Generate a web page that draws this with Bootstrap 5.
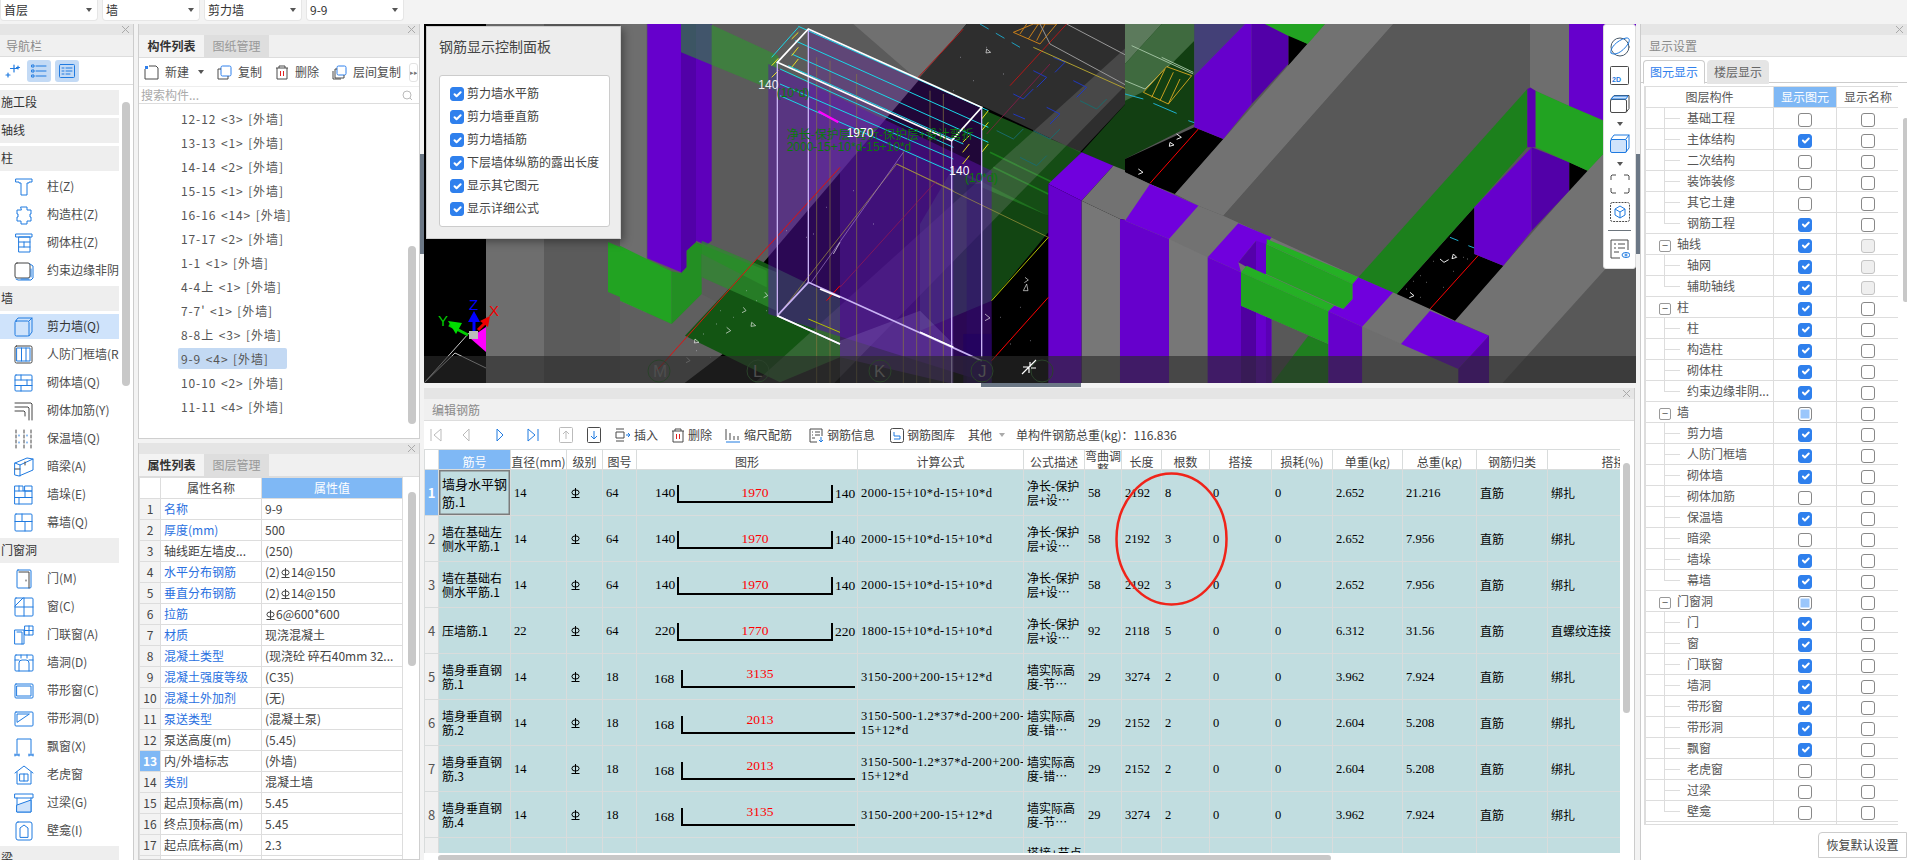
<!DOCTYPE html>
<html lang="zh">
<head>
<meta charset="utf-8">
<title>钢筋显示控制面板</title>
<link rel="stylesheet" href="https://cdn.jsdelivr.net/npm/bootstrap@5.3.0/dist/css/bootstrap.min.css">
<style>
html,body{height:100%;overflow:hidden}
body{width:1907px;height:860px;background:#f3f3f3;font:12px/1.2 "Noto Sans CJK SC","Liberation Sans",sans-serif;color:#4d4d4d}
.ic{fill:none;stroke:#1f7ae0;stroke-width:1;stroke-linejoin:round;stroke-linecap:round;flex:none}
.icd{fill:none;stroke:#4a4a4a;stroke-width:1;stroke-linejoin:round;flex:none}
.top-bar{height:24px}
.sel-box{width:98px;height:21px;background:#fff;border:1px solid #e6e6e6;border-top:0;border-radius:0 0 4px 4px;padding:0 5px 0 3px;font-size:12px;color:#333}
.tri{width:0;height:0;border-left:3.5px solid transparent;border-right:3.5px solid transparent;border-top:4px solid #555;flex:none}
.app-main{height:836px}
.col-nav{width:134px;background:#fff;border-right:1px solid #ccc}
.col-mid{width:282px;margin-left:4px}
.pane{background:#fff;border:1px solid #cfcfcf;border-top:0}
.pane-top{height:415px}
.pane-bot{height:417px;margin-top:4px}
.strip{height:11px;background:#e5e5e5;flex:none;position:relative}
.strip-x{position:absolute;right:3px;top:1px;width:9px;height:9px}
.p-title{height:22px;line-height:22px;background:#f0f0f0;color:#8a8a8a;padding-left:6px;border-bottom:1px solid #ddd;flex:none}
.nav-tool{height:28px;padding-left:5px;border-bottom:1px solid #ddd}
.nt-btn{width:24px;height:22px;background:#c3daf5;border-radius:3px}
.nav-ul{width:119px;padding-top:5px}
.nav-ul .list-group-item{height:25px;margin-bottom:3px;padding:0;border:0;background:#fff;font-size:12px;color:#4d4d4d;white-space:nowrap;overflow:hidden;border-radius:0}
.nav-ul .nav-grp{background:#eee;padding-left:1px;color:#333}
.nav-ul .nav-it{padding-left:14px;gap:13px}
.nav-ul .list-group-item.active{background:#cfe3fb;color:#333;margin-top:0}
.scr{position:absolute;background:#c8c8c8;border-radius:4px;width:8px}
.scr-nav{left:122px;top:78px;height:284px}
.scr-list{left:269px;top:222px;height:178px}
.scr-prop{left:269px;top:49px;height:174px}
.scr-rb{left:1199px;top:75px;height:250px;width:7px}
.scr-disp{left:262px;top:94px;height:184px;width:5px}
.tab-row{height:23px;background:#f0f0f0;border-bottom:1px solid #ddd;padding:0}
.tab-row .nav-link{width:65px;height:22px;padding:0;line-height:22px;text-align:center;border:0;border-radius:0;color:#999;background:#dedede;font-size:12px}
.tab-row .nav-link.active{background:#f3f3f3;color:#333;font-weight:700}
.tl-row{height:28px;padding-left:5px;gap:5px;border-bottom:0;white-space:nowrap}
.tl-row .tg{flex:none}
.tl-more{width:9px;height:19px;border:1px solid #e3e3e3;border-radius:3px;font-size:7px;color:#777;margin-left:auto;margin-right:1px;line-height:17px;text-align:center;flex:none;overflow:hidden}
.srch{height:18px;border:0;border-top:1px solid #eee;border-bottom:1px solid #ddd;border-radius:0;padding:0 6px 0 2px;color:#aaa;font-size:12px;background:#fff}
.cp-list{padding-top:3px}
.cp-list .list-group-item{height:24px;line-height:24px;border:0;padding:0 0 0 42px;background:transparent;color:#555;font-size:12px;word-spacing:1px;letter-spacing:.9px}
.sel-tag{display:inline-block;background:#c3d9f3;border-radius:2px;height:21px;line-height:21px;padding:0 18px 0 3px;margin-left:-3px}
.tb-prop{width:264px;table-layout:fixed;margin:0;font-size:12px;border-color:#ddd;color:#444}
.tb-prop td,.tb-prop th{padding:0 0 0 3px;height:21px;line-height:20px;font-weight:400;border-color:#ddd;white-space:nowrap;overflow:hidden;background:transparent;color:inherit}
.tb-prop th{height:20px;text-align:center;padding:0}
.w21{width:21px}.w101{width:101px}
.tb-prop .rno{text-align:center;background:#f3f3f3;padding:0;color:#444;font-size:12px}
.tb-prop .rno-a{background:#7fb8f5;color:#fff;font-weight:700}
.th-a{background:#7fb8f5!important;color:#fff!important}
.lnk{color:#2a70e0!important}
.cell-cur{box-shadow:inset 0 0 0 2px #7c7c7c}
.hrb{width:9px;height:10px;fill:none;stroke:currentColor;stroke-width:1;vertical-align:-1px;margin:0 1px}
.sp-v{width:4px;position:relative}
.sp-bar{position:absolute;left:0;top:130px;width:4px;height:100px;background:#6b7785}
.col-ctr{width:1212px}
.cv{height:359px;position:relative;overflow:hidden;background:#000}
.cv svg.scene{display:block}
.ctrl{position:absolute;left:2px;top:2px;width:195px;height:213px;background:#ededed;border:1px solid #cfcfcf;box-shadow:3px 3px 8px rgba(0,0,0,.35);padding:0 12px}
.ctrl-t{font-size:14px;line-height:20px;color:#444;margin-top:9px;margin-bottom:19px}
.ctrl-box{width:171px;height:152px;margin-left:0;background:#fff;border:1px solid #ccc;border-radius:3px;padding:6px 10px}
.ctrl-row{height:23px;display:flex;align-items:center;gap:3px;margin:0;padding:0;color:#444}
.form-check-input.cb{width:14px;height:14px;margin:0;border-radius:3px;border:1px solid #888;background-color:#fff;flex:none;float:none}
.form-check-input.cb:checked{background-color:#2f80ed;border-color:#2f80ed;background-size:13px}
.form-check-input.cb-off{background-color:#efefef;border-color:#c4c4c4}
.form-check-input.cb-part{background-color:#9ac6fb;box-shadow:inset 0 0 0 1.5px #fff}
.palette{position:absolute;left:1179px;top:0;width:33px;height:245px;background:#fff;border:1px solid #ddd;border-radius:3px;padding-top:11px;gap:0}
.sp-h{height:5px;position:relative}
.sp-h-bar{position:absolute;left:557px;top:0;width:100px;height:4px;background:#6b7785}
.ed-pane{width:1211px;height:472px;background:#fff;border-right:1px solid #ccc;position:relative;overflow:hidden}
.ed-title{height:22px;line-height:22px;background:#f0f0f0;color:#8a8a8a;padding-left:8px;border-bottom:1px solid #ddd}
.ed-tool{height:28px;color:#444;padding-left:6px;flex:none}
.tg{gap:3px;display:flex;align-items:center}
.m3{margin-left:3px}
.rb-wrap{width:1196px;height:404px;overflow:hidden;flex:none}
.tb-rb{width:1279px;table-layout:fixed;margin:0;border-color:#d9dcdc;font-size:12px;color:#000}
.tb-rb th,.tb-rb td{padding:0 0 0 3px;border-color:#d9dcdc;background:transparent;color:inherit;line-height:14px;overflow:hidden}
.tb-rb tbody tr{height:45px}
.tb-rb thead tr{height:20px}
.tb-rb th{font-weight:400;text-align:center;color:#444;padding:0;background:#fff;white-space:nowrap}
.tb-rb th.th-a{background:#7fb8f5!important}
.tb-rb td{background:#c1dde0;font-family:"Liberation Serif","Noto Sans CJK SC",serif;font-size:12.500px;vertical-align:middle}
.tb-rb td.cj{font-family:"Noto Sans CJK SC",sans-serif;font-size:12px}
.tb-rb td.fm{letter-spacing:.45px;white-space:nowrap}
.tb-rb td.no{background:#f0f0f0;padding:0;text-align:center;font-family:"Noto Sans CJK SC",sans-serif;color:#555;font-size:13px}
.tb-rb td.no-a{background:#7fb8f5;color:#fff;font-weight:700}
.tb-rb td.shp{padding:0}
.tb-rb td.first-a{box-shadow:inset 0 0 0 1.5px #7c7c7c;line-height:18px;font-size:13px}
.th-clip{height:20px;overflow:hidden;white-space:normal;line-height:13px;margin-top:-3px}
.c0{width:14px}.c1{width:72px}.c2{width:56px}.c3{width:36px}.c4{width:34px}.c5{width:221px}.c6{width:166px}.c7{width:61px}.c8{width:37px}.c9{width:40px}.c10{width:48px}.c11{width:62px}.c12{width:61px}.c13{width:70px}.c14{width:74px}.c15{width:71px}.c16{width:156px}
.shp svg{display:block;width:221px;height:45px}
.shp text{font-family:"Liberation Serif",serif;font-size:13.500px}
.shp .red{fill:#f00}
.hs-track{height:8px;background:#fff;padding-left:14px}
.hs-thumb{width:893px;height:6px;margin-top:2px;background:#c8c8c8;border-radius:3px}
.ring{position:absolute;left:691px;top:84px;width:113px;height:134px;pointer-events:none}
.col-right{width:267px;background:#fff;position:relative;border-left:1px solid #ccc}
.disp-tabs{height:26px;padding:3px 0 0 2px;border-bottom:1px solid #ccc;margin:0}
.disp-tabs .nav-link{height:24px;line-height:22px;width:62px;padding:0;text-align:center;font-size:12px;border-radius:4px 4px 0 0;color:#666;background:#e5e5e5;border:1px solid #e5e5e5}
.disp-tabs .nav-link.active{background:#fff;color:#2f80ed;border-color:#ccc #ccc #fff}
.disp-tabs .nav-item+.nav-item{margin-left:2px}
.disp-wrap{margin:3px 0 0 3px;width:254px;height:739px;overflow:hidden;border-left:1px solid #ddd;border-bottom:1px solid #ddd}
.tb-disp{width:254px;table-layout:fixed;margin:0;font-size:12px;border-color:#ddd;color:#555}
.tb-disp th,.tb-disp td{padding:0;height:21px;line-height:20px;border-color:#ddd;background:transparent;color:inherit;font-weight:400;text-align:center;position:relative}
.tb-disp td.nm{text-align:left;padding-left:41px;white-space:nowrap;overflow:hidden}
.tb-disp td.gp{text-align:left;padding-left:13px;white-space:nowrap}
.tb-disp td.nm::before{content:"";position:absolute;left:18px;top:-1px;height:22px;border-left:1px solid #ddd}
.tb-disp td.nm.end::before{height:11px}
.tb-disp td.nm::after{content:"";position:absolute;left:18px;top:10px;width:16px;border-top:1px solid #ddd}
.w128{width:128px}.w63{width:63px}
.tb-disp .cb{vertical-align:middle}
.clp{display:inline-block;width:12px;height:12px;border:1px solid #999;border-radius:2px;line-height:9px;text-align:center;font-size:11px;margin-right:6px;vertical-align:-1px;color:#555}
.dft-btn{width:89px;height:26px;padding:0;font-size:12px;line-height:24px;background:#fff;border:1px solid #ccc;border-radius:4px 0 0 0;color:#444;margin-top:7px}
.ml20{margin-left:20px}.ml23{margin-left:23px}.ml26{margin-left:26px}.ml14{margin-left:14px}
.ml17{margin-left:17px}.ml13{margin-left:13px}.ml16{margin-left:16px}.ml15{margin-left:15px}.ml11{margin-left:11px}
</style>
</head>
<body>
<div class="top-bar d-flex gap-1">
  <div class="sel-box d-flex align-items-center justify-content-between"><span>首层</span><i class="tri"></i></div>
  <div class="sel-box d-flex align-items-center justify-content-between"><span>墙</span><i class="tri"></i></div>
  <div class="sel-box d-flex align-items-center justify-content-between"><span>剪力墙</span><i class="tri"></i></div>
  <div class="sel-box d-flex align-items-center justify-content-between"><span>9-9</span><i class="tri"></i></div>
</div>
<svg width="0" height="0" class="position-absolute"><defs>
  <symbol id="x" viewBox="0 0 9 9"><path d="M1 1l7 7M8 1L1 8" stroke="#aaa" fill="none"/></symbol>
  <symbol id="hrbs" viewBox="0 0 9 10"><ellipse cx="4.500" cy="4.500" rx="3.600" ry="2.600"/><path d="M4.500 0v9.500M.5 9.500h8"/></symbol>
</defs></svg>
<div class="app-main d-flex">
  <!-- navigation -->
  <aside class="col-nav position-relative overflow-hidden">
    <div class="strip"><svg class="strip-x"><use href="#x"/></svg></div>
    <div class="p-title">导航栏</div>
    <div class="nav-tool d-flex align-items-center gap-1">
      <svg class="ic" width="18" height="16" viewBox="0 0 18 16"><path d="M9 2v7M5.500 5.500h7M3 10v4M1 12h4M13 3v3M11.500 4.500h3" stroke-width="1.200"/></svg>
      <span class="nt-btn d-flex align-items-center justify-content-center"><svg class="ic" width="16" height="14" viewBox="0 0 16 14"><path d="M5 2h10M5 7h10M5 12h10"/><rect x="1" y="1" width="2" height="2"/><rect x="1" y="6" width="2" height="2"/><rect x="1" y="11" width="2" height="2"/></svg></span>
      <span class="nt-btn d-flex align-items-center justify-content-center"><svg class="ic" width="16" height="14" viewBox="0 0 16 14"><rect x=".5" y=".5" width="15" height="13" rx="1"/><path d="M3 4h2M7 4h6M3 7h2M7 7h6M3 10h2M7 10h4"/></svg></span>
    </div>
    <ul class="list-group nav-ul">
      <li class="list-group-item nav-grp d-flex align-items-center">施工段</li>
      <li class="list-group-item nav-grp d-flex align-items-center">轴线</li>
      <li class="list-group-item nav-grp d-flex align-items-center">柱</li>
      <li class="list-group-item nav-it d-flex align-items-center"><svg class="ic" width="20" height="20" viewBox="0 0 20 20"><path d="M2 2h16v3h-3v1h-2v12H7V6H5V5H2z"/></svg>柱(Z)</li>
      <li class="list-group-item nav-it d-flex align-items-center"><svg class="ic" width="20" height="20" viewBox="0 0 20 20"><path d="M7 2h6v3h4v4h-1v3h1v4h-4v3H7v-3H3v-4h1V9H3V5h4z"/></svg>构造柱(Z)</li>
      <li class="list-group-item nav-it d-flex align-items-center"><svg class="ic" width="20" height="20" viewBox="0 0 20 20"><path d="M2 1h16v3H2zM5 4h11v15H5zM5 9h11M5 14h11M10 9v5"/></svg>砌体柱(Z)</li>
      <li class="list-group-item nav-it d-flex align-items-center"><svg class="ic" width="20" height="20" viewBox="0 0 20 20"><rect x="1" y="2" width="15" height="15" rx="2" stroke="#444"/><path d="M16 3l3 2v12l-2 2H4l-2-1M17 8v8M7 18h8"/></svg>约束边缘非阴</li>
      <li class="list-group-item nav-grp d-flex align-items-center">墙</li>
      <li class="list-group-item nav-it active d-flex align-items-center"><svg class="ic" width="20" height="20" viewBox="0 0 20 20"><rect x="1" y="4" width="14" height="15" rx="1.500"/><path d="M1.500 4L4 1h14v14l-3 4M15 4l3-3"/></svg>剪力墙(Q)</li>
      <li class="list-group-item nav-it d-flex align-items-center"><svg class="ic" width="20" height="20" viewBox="0 0 20 20"><rect x="1" y="1" width="17" height="17" rx="1.500" stroke="#444"/><rect x="3" y="3" width="13" height="13"/><path d="M7.500 3v13M12 3v13"/></svg>人防门框墙(R</li>
      <li class="list-group-item nav-it d-flex align-items-center"><svg class="ic" width="20" height="20" viewBox="0 0 20 20"><rect x="1" y="2" width="17" height="16" rx="1"/><path d="M1 7h17M1 12.500h17M7 2v5M13 7v5.500M7 12.500V18"/></svg>砌体墙(Q)</li>
      <li class="list-group-item nav-it d-flex align-items-center"><svg class="ic" width="20" height="20" viewBox="0 0 20 20"><path d="M1 2h16l1 1v16M1 6h13l1 1v12M1 10h9l1 1v4" stroke="#444"/></svg>砌体加筋(Y)</li>
      <li class="list-group-item nav-it d-flex align-items-center"><svg class="ic" width="20" height="20" viewBox="0 0 20 20"><path d="M2 1v18M10 1v18M17 1v18" stroke="#444" stroke-dasharray="3 2"/><path d="M5 6v1M13 6v1M5 13v1M13 13v1"/></svg>保温墙(Q)</li>
      <li class="list-group-item nav-it d-flex align-items-center"><svg class="ic" width="20" height="20" viewBox="0 0 20 20"><path d="M1 6l12-5 6 1v11L5 19l-4-1zM1 6l5 2 13-6M6 8v11"/><path d="M1 12h5M11 5v3" stroke="#444"/></svg>暗梁(A)</li>
      <li class="list-group-item nav-it d-flex align-items-center"><svg class="ic" width="20" height="20" viewBox="0 0 20 20"><path d="M1 1h8v5h9v13H1zM1 6h8M1 12.500h17M5 1v5M5 12.500V19M11 6v6.500"/><rect x="11" y="1" width="7" height="5"/></svg>墙垛(E)</li>
      <li class="list-group-item nav-it d-flex align-items-center"><svg class="ic" width="20" height="20" viewBox="0 0 20 20"><rect x="1" y="1" width="17" height="17" rx="1"/><path d="M1 8.500h17M8 1v7.500M11 8.500V18"/></svg>幕墙(Q)</li>
      <li class="list-group-item nav-grp d-flex align-items-center">门窗洞</li>
      <li class="list-group-item nav-it d-flex align-items-center"><svg class="ic" width="20" height="20" viewBox="0 0 20 20"><rect x="3" y="1" width="14" height="18" rx="1"/><path d="M5 3h10v16M12 11v1" stroke="#444"/></svg>门(M)</li>
      <li class="list-group-item nav-it d-flex align-items-center"><svg class="ic" width="20" height="20" viewBox="0 0 20 20"><rect x="1" y="1" width="18" height="18" rx="1"/><path d="M1 10h18M10 1v18M1 9L9 1"/></svg>窗(C)</li>
      <li class="list-group-item nav-it d-flex align-items-center"><svg class="ic" width="20" height="20" viewBox="0 0 20 20"><path d="M1 5h9v14H1zM3 7h5v12M11 1h8v9h-8zM11 5.500h8M15 1v9"/></svg>门联窗(A)</li>
      <li class="list-group-item nav-it d-flex align-items-center"><svg class="ic" width="20" height="20" viewBox="0 0 20 20"><rect x="1" y="2" width="18" height="16" rx="1"/><path d="M1 7h4M15 7h4M7 2v3M13 2v3M5 18v-8a3 3 0 0 1 3-3h4a3 3 0 0 1 3 3v8"/></svg>墙洞(D)</li>
      <li class="list-group-item nav-it d-flex align-items-center"><svg class="ic" width="20" height="20" viewBox="0 0 20 20"><rect x="1" y="3" width="18" height="14" rx="1"/><rect x="3" y="5" width="14" height="10"/></svg>带形窗(C)</li>
      <li class="list-group-item nav-it d-flex align-items-center"><svg class="ic" width="20" height="20" viewBox="0 0 20 20"><rect x="1" y="3" width="18" height="14" rx="1"/><path d="M3 13V5h12z"/></svg>带形洞(D)</li>
      <li class="list-group-item nav-it d-flex align-items-center"><svg class="ic" width="20" height="20" viewBox="0 0 20 20"><path d="M3 18V2h14v16M1 18h4M15 18h4M1 17v2M5 17v2M15 17v2M19 17v2"/></svg>飘窗(X)</li>
      <li class="list-group-item nav-it d-flex align-items-center"><svg class="ic" width="20" height="20" viewBox="0 0 20 20"><path d="M1 8l9-7 9 7M3 7v12h14V7M6 9h8v7H6zM10 9v7"/></svg>老虎窗</li>
      <li class="list-group-item nav-it d-flex align-items-center"><svg class="ic" width="20" height="20" viewBox="0 0 20 20"><rect x="1" y="1" width="18" height="4"/><path d="M3 5v14h14V5"/><path d="M3 12l14-5v12H3z" fill="#cfe3fb"/></svg>过梁(G)</li>
      <li class="list-group-item nav-it d-flex align-items-center"><svg class="ic" width="20" height="20" viewBox="0 0 20 20"><rect x="2" y="1" width="16" height="18" rx="2"/><path d="M6 16V7l4-3 4 3v9z"/></svg>壁龛(I)</li>
      <li class="list-group-item nav-grp d-flex align-items-center">梁</li>
    </ul>
    <div class="scr scr-nav"></div>
  </aside>
  <!-- lists -->
  <div class="col-mid d-flex flex-column">
    <section class="pane pane-top position-relative overflow-hidden">
      <div class="strip"><svg class="strip-x"><use href="#x"/></svg></div>
      <ul class="nav tab-row">
        <li class="nav-item"><a class="nav-link active">构件列表</a></li>
        <li class="nav-item"><a class="nav-link">图纸管理</a></li>
      </ul>
      <div class="tl-row d-flex align-items-center">
        <span class="tg"><svg class="icd" width="15" height="15" viewBox="0 0 15 15"><path d="M5 1h7l2 2v11H1V4"/><path d="M1 1h3v3H1z" fill="#2f80ed" stroke="none"/></svg><span class="m3">新建</span></span><i class="tri ms-1 me-2"></i>
        <span class="tg"><svg class="icd" width="15" height="15" viewBox="0 0 15 15"><rect x="4" y="1" width="10" height="10" rx="1.500" stroke="#2f80ed"/><path d="M4 4H1v10h10v-3"/></svg><span class="m3">复制</span></span>
        <span class="tg ms-2"><svg class="icd" width="14" height="15" viewBox="0 0 14 15"><path d="M1 3h12M4 3V1h6v2M2 3v11h10V3"/><path d="M5.500 6v5M8.500 6v5" stroke="#e02020"/></svg><span class="m3">删除</span></span>
        <span class="tg ms-2"><svg class="icd" width="15" height="15" viewBox="0 0 15 15"><rect x="5" y="1" width="9" height="9" rx="1.500" stroke="#2f80ed"/><path d="M5 4H3v9h9v-3M1 6v8h8"/></svg><span class="m3">层间复制</span></span>
        <span class="tl-more">▸▸</span>
      </div>
      <div class="srch form-control d-flex align-items-center justify-content-between"><span>搜索构件...</span><svg class="icd" width="11" height="11" viewBox="0 0 11 11"><circle cx="5" cy="5" r="4" stroke="#bbb"/><path d="M8 8l2 2" stroke="#bbb"/></svg></div>
      <ul class="list-group cp-list rounded-0">
        <li class="list-group-item">12-12 &lt;3&gt; [外墙]</li>
        <li class="list-group-item">13-13 &lt;1&gt; [外墙]</li>
        <li class="list-group-item">14-14 &lt;2&gt; [外墙]</li>
        <li class="list-group-item">15-15 &lt;1&gt; [外墙]</li>
        <li class="list-group-item">16-16 &lt;14&gt; [外墙]</li>
        <li class="list-group-item">17-17 &lt;2&gt; [外墙]</li>
        <li class="list-group-item">1-1 &lt;1&gt; [外墙]</li>
        <li class="list-group-item">4-4上 &lt;1&gt; [外墙]</li>
        <li class="list-group-item">7-7' &lt;1&gt; [外墙]</li>
        <li class="list-group-item">8-8上 &lt;3&gt; [外墙]</li>
        <li class="list-group-item"><span class="sel-tag">9-9 &lt;4&gt; [外墙]</span></li>
        <li class="list-group-item">10-10 &lt;2&gt; [外墙]</li>
        <li class="list-group-item">11-11 &lt;4&gt; [外墙]</li>
      </ul>
      <div class="scr scr-list"></div>
    </section>
    <section class="pane pane-bot position-relative overflow-hidden">
      <div class="strip"><svg class="strip-x"><use href="#x"/></svg></div>
      <ul class="nav tab-row">
        <li class="nav-item"><a class="nav-link active">属性列表</a></li>
        <li class="nav-item"><a class="nav-link">图层管理</a></li>
      </ul>
      <table class="table table-bordered tb-prop">
        <colgroup><col class="w21"><col class="w101"><col></colgroup>
        <thead><tr><th></th><th>属性名称</th><th class="th-a">属性值</th></tr></thead>
        <tbody>
          <tr><td class="rno">1</td><td class="lnk">名称</td><td>9-9</td></tr>
          <tr><td class="rno">2</td><td class="lnk">厚度(mm)</td><td>500</td></tr>
          <tr><td class="rno">3</td><td>轴线距左墙皮...</td><td>(250)</td></tr>
          <tr><td class="rno">4</td><td class="lnk">水平分布钢筋</td><td>(2)<svg class="hrb"><use href="#hrbs"/></svg>14@150</td></tr>
          <tr><td class="rno">5</td><td class="lnk">垂直分布钢筋</td><td>(2)<svg class="hrb"><use href="#hrbs"/></svg>14@150</td></tr>
          <tr><td class="rno">6</td><td class="lnk">拉筋</td><td><svg class="hrb"><use href="#hrbs"/></svg>6@600*600</td></tr>
          <tr><td class="rno">7</td><td class="lnk">材质</td><td>现浇混凝土</td></tr>
          <tr><td class="rno">8</td><td class="lnk">混凝土类型</td><td>(现浇砼 碎石40mm 32...</td></tr>
          <tr><td class="rno">9</td><td class="lnk">混凝土强度等级</td><td>(C35)</td></tr>
          <tr><td class="rno">10</td><td class="lnk">混凝土外加剂</td><td>(无)</td></tr>
          <tr><td class="rno">11</td><td class="lnk">泵送类型</td><td>(混凝土泵)</td></tr>
          <tr><td class="rno">12</td><td>泵送高度(m)</td><td>(5.45)</td></tr>
          <tr><td class="rno rno-a">13</td><td>内/外墙标志</td><td class="cell-cur">(外墙)</td></tr>
          <tr><td class="rno">14</td><td class="lnk">类别</td><td>混凝土墙</td></tr>
          <tr><td class="rno">15</td><td>起点顶标高(m)</td><td>5.45</td></tr>
          <tr><td class="rno">16</td><td>终点顶标高(m)</td><td>5.45</td></tr>
          <tr><td class="rno">17</td><td>起点底标高(m)</td><td>2.3</td></tr>
          <tr><td class="rno">18</td><td>终点底标高(m)</td><td>2.3</td></tr>
        </tbody>
      </table>
      <div class="scr scr-prop"></div>
    </section>
  </div>
  <div class="sp-v"><div class="sp-bar"></div></div>
  <!-- centre -->
  <main class="col-ctr d-flex flex-column">
    <div class="cv">
      <svg class="scene" width="1212" height="359" viewBox="424 24 1212 359">
        <rect x="424" y="24" width="1212" height="359" fill="#000"/>
        <rect x="486" y="24" width="58" height="359" fill="#6e6e6e"/>
        <rect x="544" y="24" width="80" height="359" fill="#5b5b5b"/>
        <polygon points="608,242 620,247 620,297 608,292" fill="#22a322"/>
        <!-- left axis triad -->
        <polygon points="470,338 486,327 486,352" fill="#f0f"/>
        <path d="M469,333 L424,383 M455,353 L486,368 M424,383 L455,353" stroke="#ccc" fill="none"/>
        <path d="M449,325 L468,335" stroke="#0c0" stroke-width="3"/><polygon points="448,321 462,323 456,334" fill="#0d0"/>
        <path d="M474,316 V334" stroke="#00f" stroke-width="3"/><polygon points="474,311 480,322 468,322" fill="#00f"/>
        <path d="M478,330 L488,320" stroke="#e00" stroke-width="3"/><polygon points="490,316 488,327 480,321" fill="#e00"/>
        <rect x="469" y="331" width="9" height="8" fill="#bbb"/>
        <text x="438" y="326" fill="#0c0" font-size="15" font-family="Liberation Sans">Y</text>
        <text x="469" y="310" fill="#00f" font-size="15" font-family="Liberation Sans">Z</text>
        <text x="489" y="316" fill="#e00" font-size="15" font-family="Liberation Sans">X</text>
        <!-- scene centre -->
        <g transform="translate(620 24) scale(.33333)">
          <rect width="1530" height="1080" fill="#5b5b5b"/>
          <rect width="80" height="1080" fill="#6e6e6e"/>
          <polygon points="700,0 1045,0 890,165" fill="#707070"/>
          <polygon points="1040,0 1530,0 1530,1080 120,1080" fill="#000"/>
          <polygon points="1040,0 1530,0 1530,225 1380,385 1085,245 895,165" fill="#2e2e2e"/>
          <polygon points="1385,385 1530,225 1530,450 1480,430" fill="#123f12"/>
          <polygon points="0,830 155,900 245,810 420,905 190,1080 0,1080" fill="#5f5f5f"/>
          <polygon points="410,705 660,825 660,1000 480,1075 195,935" fill="#135513"/>
          <polygon points="1000,430 1285,575 1285,625 1115,830 900,920 900,600" fill="#124512"/>
          <!-- purple column -->
          <polygon points="82,0 183,0 183,745 82,703" fill="#6600cc"/>
          <polygon points="183,0 228,0 228,655 200,680 200,730 183,748" fill="#5200a8"/>
          <polygon points="228,0 275,0 275,650 260,663 228,650" fill="#5e00bb"/>
          <!-- green wall -->
          <polygon points="0,665 155,742 155,900 0,830" fill="#22a322"/>
          <polygon points="155,742 183,748 200,730 200,680 228,655 440,740 440,790 245,690 245,810 155,900" fill="#238f23"/>
          <polygon points="245,650 470,745 470,860 245,760" fill="#2e8a2e" opacity=".75"/>
          <!-- beams -->
          <polygon points="183,0 270,0 475,95 475,205 183,85" fill="#2a9a2a" opacity=".55"/>
          <polygon points="1085,255 1385,385 1360,410 1360,445 1310,470 1285,480 1285,575 1085,490" fill="#2a9a2a" opacity=".5"/>
          <path d="M1120,430 L1285,510 M1110,385 L1360,505" stroke="#23b023" stroke-width="5" opacity=".5"/>
          <polygon points="1530,60 1530,170 640,1080 400,1080" fill="#aaa" opacity=".22"/>
          <!-- right hand column -->
          <polygon points="1285,480 1385,385 1480,425 1385,530" fill="#7000dd"/>
          <polygon points="1285,480 1385,530 1385,1080 1285,1080" fill="#6600cc"/>
          <polygon points="1385,530 1480,425 1530,445 1530,590 1500,585" fill="#727272"/>
          <polygon points="1385,530 1500,585 1500,1080 1385,1080" fill="#777"/>
          <polygon points="1500,585 1530,590 1530,1080 1500,1080" fill="#6600cc"/>
          <!-- box body -->
          <polygon points="445,120 1115,440 1115,1080 445,870" fill="#5510a8" opacity=".5"/>
          <polygon points="565,15 1085,250 1085,480 660,290 660,430 565,530" fill="#6a18b8" opacity=".3"/>
          <polygon points="660,290 1000,440 1000,1080 660,1000" fill="#5a1ca6" opacity=".45"/>
          <polygon points="660,950 900,860 1000,960 1000,1080 660,1080" fill="#a99be0" opacity=".2"/>
          <rect x="1040" y="480" width="45" height="600" fill="#2a0a70" opacity=".35"/>
          <rect x="1030" y="930" width="85" height="150" fill="#200060" opacity=".6"/>
          <g fill="none" stroke="#8a7a40" stroke-width="2">
            <path d="M590,100V1080M630,110V1080M710,150V1080M850,380V1080M890,400V1080M930,200V1080M970,210V1080"/>
            <path d="M470,880L830,420L1000,500M830,420L1285,640" stroke="#a99a40"/>
            <path d="M570,780L850,385" stroke="#a07cc8"/>
          </g>
          <path d="M660,430 L410,705 L110,1040" stroke="#e01010" stroke-width="3" fill="none"/>
          <path d="M1030,15 L890,165M1340,0 L1170,185" stroke="#b01818" stroke-width="3" fill="none"/>
          <path d="M1115,1010 L1285,820" stroke="#f00" stroke-width="3"/>
          <path d="M620,830 L660,785" stroke="#f00" stroke-width="3"/>
          <path d="M660,790 L950,470 M1100,330 L1290,120" stroke="#a01850" stroke-width="2"/>
          <g stroke="#19d8e8" stroke-width="3" fill="none">
            <path d="M535,7 L1105,260M525,50 L1105,310M515,90 L1105,355M505,125 L1030,360M480,135 L1000,370M480,180 L1000,405M480,215 L1000,445"/>
            <path d="M455,100 L535,10"/>
          </g>
          <g stroke="#e8e020" stroke-width="3" fill="none">
            <path d="M515,45 L535,25M515,95 L535,70M515,130 L535,105M455,125 L475,103M455,160 L475,140M1028,355 L1048,335M1085,320 L1105,295M1085,285 L1105,260M1028,385 L1048,360M1028,420 L1048,395M1085,385 L1105,360"/>
            <path d="M565,885 L660,925M1115,830 L1285,640" stroke="#b4c000"/>
          </g>
          <g stroke="#c9b2f4" stroke-width="5" fill="none">
            <path d="M472,115 V875M995,350 V1080M1085,250 V1000M565,15 V775" stroke-width="4"/>
            <path d="M472,875 L565,775L1085,1010M472,875 L660,960M900,925 L1085,1010"/>
          </g>
          <g stroke="#fff" stroke-width="5" fill="none">
            <path d="M472,115 L995,350L1085,250L565,15Z"/>
            <path d="M472,875 L660,960M600,795 L660,820M900,925 L1000,970"/>
            <path d="M640,690 L660,655" stroke-width="2"/>
          </g>
          <path d="M595,262 L655,295" stroke="#f0f" stroke-width="7"/>
          <text x="500" y="345" fill="#0a7a0a" font-size="36" font-family="Noto Sans CJK SC">净长-保护层-弯折-保护层+设计弯折</text>
          <text x="500" y="380" fill="#0a7a0a" font-size="36" font-family="Liberation Sans">2000-15+10*d-15+10*d</text>
          <text x="470" y="218" fill="#0a7a0a" font-size="36" font-family="Liberation Sans">(10*d)</text>
          <text x="1035" y="475" fill="#0a7a0a" font-size="36" font-family="Liberation Sans">(10*d)</text>
          <text x="415" y="196" fill="#eee" font-size="36" font-family="Liberation Sans">140</text>
          <text x="680" y="340" fill="#fff" font-size="36" font-family="Liberation Sans">1970</text>
          <text x="988" y="453" fill="#fff" font-size="36" font-family="Liberation Sans">140</text>
          <!-- rebar ticks and dots -->
          <g stroke="#2038c0" stroke-width="3" fill="none">
            <path d="M1180,210l30,15 30,-30M1240,140l40,20 -30,30M1300,100l35,15 -30,30M1360,170l40,20 -30,30M1280,250l40,20 -30,30M1180,270l35,15"/>
          </g>
          <g stroke="#1a6a6a" stroke-width="3" fill="none"><path d="M1130,320l50,25 30,-30M1240,320l50,25 30,-30M1380,230l50,25 30,-30M1200,400l50,25 30,-30"/></g>
          <path d="M1180,25 L1240,0 L1310,0 L1260,60 Z" fill="none" stroke="#c9801a" stroke-width="3"/>
          <path d="M1200,30l20,-30M1225,45l30,-45M1250,50l25,-50" stroke="#c9801a" stroke-width="3"/>
          <path d="M1260,0 L1290,60 L1530,190 M1340,0 L1530,100" stroke="#999" stroke-width="3" fill="none"/>
          <path d="M1080,0 L1200,70" stroke="#1fa0c0" stroke-width="3" stroke-dasharray="30 25"/>
          <path d="M1240,70 L1530,200" stroke="#b0a030" stroke-width="3"/>
          <path d="M300,860h1M340,880h1M380,800h1M410,830h1M290,900h1M250,930h1M440,860h1M230,980h1M270,1000h1M1140,880h1M1200,850h1M1230,950h1M1170,960h1M1020,100h1M1100,70h1M1150,150h1M1000,200h1M1060,170h1M620,550h1M560,640h1M700,500h1M760,600h1M500,620h1M580,630h1" stroke="#dde" stroke-width="4"/>
          <path d="M1215,760l10,8 -12,8M1095,870l15,12 -15,8M320,910l12,10 -14,8M370,850l8,10 -12,6M435,805l8,10 -12,6M200,1000l10,10 -12,6M1220,780l-10,20 14,0z M395,895l12,10 -14,2z M225,945l12,10 -14,2z M1100,75l12,10 -14,2z" stroke="#eee" stroke-width="2" fill="none"/>
        </g>
        <!-- scene right -->
        <g transform="translate(1125 24) scale(.33333)">
          <rect width="1545" height="1080" fill="#585858"/>
          <polygon points="0,0 208,0 208,300 0,405" fill="#123f12"/>
          <polygon points="0,0 110,0 0,120" fill="#5c7a5c"/>
          <polygon points="110,0 208,0 208,50 60,200 0,230 0,120" fill="#3f6a3f"/>
          <path d="M20,65 L205,150M110,100 L205,145M0,170 L60,195 L130,125" stroke="#9fc09f" stroke-width="3" fill="none"/>
          <polygon points="55,205 125,128 200,155 130,240" fill="#123f12" stroke="#c9a020" stroke-width="3"/>
          <path d="M80,220l40,-85M105,230l40,-85M130,240l35,-75" stroke="#c9a020" stroke-width="3"/>
          <path d="M85,238 L155,268 M0,210 L55,225" stroke="#1fb0d0" stroke-width="3" fill="none"/>
          <polygon points="208,310 295,345 150,510 75,480 0,445 0,405" fill="#000"/>
          <polygon points="490,30 548,60 490,125" fill="#000"/>
          <polygon points="600,0 805,0 295,575 220,545 150,510" fill="#727272"/>
          <polygon points="805,0 1215,0 1215,190 700,760 295,575" fill="#585858"/>
          <polygon points="208,0 360,0 208,155" fill="#434077"/>
          <polygon points="208,155 360,0 380,0 380,240 295,345 208,310" fill="#6600cc"/>
          <polygon points="380,0 420,0 490,35 490,120 380,240" fill="#5200a8"/>
          <polygon points="420,0 600,0 548,60 490,35" fill="#22a322"/>
          <path d="M75,478 L220,315" stroke="#f00" stroke-width="3"/>
          <path d="M190,290 L208,296" stroke="#1fb0d0" stroke-width="3"/>
          <polygon points="295,575 700,760 805,805 915,855 1000,890 1000,1080 0,1080 0,445 75,480 220,545" fill="#727272"/>
          <polygon points="0,590 75,480 220,545 132,645" fill="#7000dd"/>
          <polygon points="0,590 132,645 132,1080 0,1080" fill="#6600cc"/>
          <polygon points="132,645 248,700 248,1080 132,1080" fill="#777"/>
          <polygon points="440,885 610,960 610,1080 440,1080" fill="#585858"/>
          <polygon points="440,1080 550,935 610,960 610,1080" fill="#1f7f1f"/>
          <polygon points="340,598 440,640 425,660 425,750 393,745 393,650 340,715 348,745 248,700" fill="#7000dd"/>
          <polygon points="248,700 348,745 348,1080 248,1080" fill="#6600cc"/>
          <polygon points="340,715 393,650 393,745" fill="#5500aa"/>
          <polygon points="393,650 423,660 423,750 393,745" fill="#6600cc"/>
          <polygon points="348,845 393,865 393,1080 348,1080" fill="#5000a0"/>
          <polygon points="393,865 423,878 423,1080 393,1080" fill="#6600cc"/>
          <polygon points="423,878 440,885 440,1080 423,1080" fill="#5a00b5"/>
          <polygon points="425,645 700,760 683,780 425,660" fill="#25b025"/>
          <polygon points="423,660 683,780 683,825 655,855 423,750" fill="#22a322"/>
          <polygon points="365,725 628,845 610,862 348,745" fill="#25b025"/>
          <polygon points="348,745 610,862 610,960 348,845" fill="#22a322"/>
          <polygon points="610,862 628,845 655,855 683,825 683,780 700,760 805,805 712,908" fill="#7000dd"/>
          <polygon points="610,862 712,908 712,1080 610,1080" fill="#6600cc"/>
          <polygon points="712,908 805,805 915,855 828,960" fill="#727272"/>
          <polygon points="712,908 828,960 1000,1035 1000,1080 712,1080" fill="#6e6e6e"/>
          <polygon points="990,890 1385,440 1545,280 1545,620 1130,1080 1092,1080 1092,935" fill="#727272"/>
          <polygon points="815,810 1048,550 1048,690 1135,725 990,890 915,855" fill="#000"/>
          <path d="M915,855 L1062,692" stroke="#f00" stroke-width="3"/>
          <path d="M975,640l25,10M1030,665l18,7" stroke="#1fb0d0" stroke-width="3"/>
          <path d="M925,712h1M985,742h1M885,755h1M865,772h1M905,775h1M955,790h1M845,795h1M885,820h1M1015,700h1M1028,705h1" stroke="#ddd" stroke-width="4"/>
          <path d="M945,705l12,10 14,-8M985,690l10,10 -14,4zM855,805l12,10 -14,6M40,435l14,10 -14,6M155,330l14,10 -14,6M135,355l12,8 -14,4z" stroke="#eee" stroke-width="3" fill="none"/>
          <polygon points="700,760 1207,195 1207,370 1048,550 815,810" fill="#1c801c"/>
          <polygon points="1207,195 1218,190 1232,200 1232,370 1207,370" fill="#5a00b0"/>
          <polygon points="1048,550 1220,370 1220,620 1135,725 1048,690" fill="#6600cc"/>
          <polygon points="1220,370 1333,415 1333,500 1220,620" fill="#5200a8"/>
          <polygon points="1333,415 1388,440 1333,500" fill="#000"/>
          <polygon points="1232,200 1435,290 1435,390 1388,440 1232,370" fill="#22a322"/>
          <polygon points="1215,0 1332,0 1332,245 1232,200 1215,190" fill="#6e6e6e"/>
          <polygon points="1332,0 1435,0 1545,0 1545,335 1332,245" fill="#6600cc"/>
          <polygon points="1435,290 1545,340 1545,450 1435,390" fill="#22a322"/>
          <polygon points="828,960 915,860 1092,935 1000,1035" fill="#7000dd"/>
          <polygon points="1000,1035 1092,935 1092,1080 1000,1080" fill="#5500aa"/>
        </g>
        <!-- bottom status band with axis letters -->
        <g font-family="Liberation Sans" font-size="17" fill="#8a8a8a">
          <circle cx="659" cy="371" r="11" fill="none" stroke="#2a6a2a"/>
          <circle cx="758" cy="371" r="11" fill="none" stroke="#2a6a2a"/>
          <circle cx="880" cy="371" r="11" fill="none" stroke="#2a6a2a"/>
          <circle cx="982" cy="371" r="11" fill="none" stroke="#2a6a2a"/>
          <circle cx="1042" cy="371" r="11" fill="none" stroke="#2a6a2a"/>
          <text x="653" y="377">M</text><text x="753" y="377">L</text><text x="874" y="377">K</text><text x="978" y="377">J</text>
        </g>
        <rect x="424" y="356" width="1212" height="27" fill="rgb(42,42,42)" fill-opacity=".63"/>
        <path d="M1022,374 L1029,367 M1029,367h-6M1029,367v6M1036,360 L1029,367 M1031,368h5 M1030,362v5" stroke="#fff" fill="none" stroke-width="1.200"/>
      </svg>
      <!-- rebar control panel -->
      <div class="ctrl">
        <div class="ctrl-t">钢筋显示控制面板</div>
        <div class="ctrl-box">
          <label class="ctrl-row"><input class="form-check-input cb" type="checkbox" checked>剪力墙水平筋</label>
          <label class="ctrl-row"><input class="form-check-input cb" type="checkbox" checked>剪力墙垂直筋</label>
          <label class="ctrl-row"><input class="form-check-input cb" type="checkbox" checked>剪力墙插筋</label>
          <label class="ctrl-row"><input class="form-check-input cb" type="checkbox" checked>下层墙体纵筋的露出长度</label>
          <label class="ctrl-row"><input class="form-check-input cb" type="checkbox" checked>显示其它图元</label>
          <label class="ctrl-row"><input class="form-check-input cb" type="checkbox" checked>显示详细公式</label>
        </div>
      </div>
      <!-- view palette -->
      <div class="palette d-flex flex-column align-items-center">
        <svg width="22" height="22" viewBox="0 0 22 22" class="ic"><circle cx="11" cy="11" r="9" stroke="#4a5a6a"/><path d="M2 17C0 13 8 4 17 2c4-.5 4 3 2 6M2 17c3 3 11 0 17-9" stroke="#1f7ae0"/></svg>
        <svg width="20" height="20" viewBox="0 0 20 20" class="icd mt-2"><rect x=".5" y=".5" width="18" height="18" rx="1"/><text x="2" y="16" font-family="Liberation Sans" font-size="7" font-weight="700" fill="#1f7ae0" stroke="none">2D</text></svg>
        <svg width="20" height="20" viewBox="0 0 20 20" class="icd mt-2"><path d="M.5 5.500L4 1.500h15v13l-3 4"/><rect x=".5" y="5.500" width="16" height="13" rx="1.500"/><path d="M1 5l3-3h14l-2 3z" fill="#cfe3fb" stroke="#1f7ae0"/></svg>
        <i class="tri mt-2"></i>
        <svg width="20" height="20" viewBox="0 0 20 20" class="ic mt-2"><rect x=".5" y="5.500" width="16" height="13" rx="1.500" fill="#cfe3fb"/><path d="M1 5l3-4h15v13l-3 4M16 5l3-4"/></svg>
        <i class="tri mt-2"></i>
        <svg width="20" height="20" viewBox="0 0 20 20" class="icd mt-2"><path d="M1 6V2l1-1h4M14 1h4l1 1v4M19 14v4l-1 1h-4M6 19H2l-1-1v-4"/></svg>
        <svg width="20" height="20" viewBox="0 0 20 20" class="icd mt-2"><rect x=".5" y=".5" width="19" height="19" rx="2" stroke-dasharray="2 1"/><path d="M10 4l5 3v6l-5 3-5-3V7zM5 7l5 3 5-3M10 10v6" stroke="#1f7ae0"/></svg>
        <hr class="m-0 mt-2 w-75 opacity-100 border-secondary">
        <svg width="20" height="20" viewBox="0 0 20 20" class="icd mt-2"><path d="M18 11V1H1v18h9"/><path d="M4 5h2M8 5h7M4 9h2M8 9h7M4 13h5"/><ellipse cx="16" cy="16" rx="4" ry="2.500" stroke="#1f7ae0"/><circle cx="16" cy="16" r="1" stroke="#1f7ae0"/></svg>
      </div>
    </div>
    <div class="sp-h"><div class="sp-h-bar"></div></div>
    <section class="ed-pane d-flex flex-column">
      <div class="strip"><svg class="strip-x"><use href="#x"/></svg></div>
      <div class="ed-title">编辑钢筋</div>
      <div class="ed-tool d-flex align-items-center">
        <svg class="icd" width="12" height="14" viewBox="0 0 12 14"><path d="M1 1v12M11 1L4 7l7 6z" stroke="#bbb"/></svg>
        <svg class="icd ml20" width="8" height="14" viewBox="0 0 8 14"><path d="M7 1L1 7l6 6z" stroke="#bbb"/></svg>
        <svg class="icd ml26" width="8" height="14" viewBox="0 0 8 14"><path d="M1 1l6 6-6 6z" stroke="#1f7ae0"/></svg>
        <svg class="icd ml23" width="12" height="14" viewBox="0 0 12 14"><path d="M1 1l7 6-7 6zM11 1v12" stroke="#1f7ae0"/></svg>
        <svg class="icd ml20" width="14" height="16" viewBox="0 0 14 16"><rect x=".5" y=".5" width="13" height="15" rx="1" stroke="#bbb"/><path d="M7 12V4M4 7l3-3 3 3" stroke="#bbb"/></svg>
        <svg class="icd ml14" width="14" height="16" viewBox="0 0 14 16"><rect x=".5" y=".5" width="13" height="15" rx="1"/><path d="M7 4v8M4 9l3 3 3-3" stroke="#1f7ae0"/></svg>
        <span class="tg ml14"><svg class="icd" width="16" height="14" viewBox="0 0 16 14"><rect x="1" y="4" width="8" height="6"/><path d="M1 1h8M1 13h8"/><path d="M11 7h4M13 5l2 2-2 2" stroke="#1f7ae0"/></svg>插入</span>
        <span class="tg ml13"><svg class="icd" width="14" height="15" viewBox="0 0 14 15"><path d="M1 3h12M4 3V1h6v2M2 3v11h10V3"/><path d="M5.500 6v5M8.500 6v5" stroke="#e02020"/></svg>删除</span>
        <span class="tg ml13"><svg class="icd" width="16" height="15" viewBox="0 0 16 15"><path d="M1 1v11M5 5v7M9 8v4M13 8v4"/><path d="M1 14h14" stroke="#1f7ae0"/></svg>缩尺配筋</span>
        <span class="tg ml17"><svg class="icd" width="15" height="15" viewBox="0 0 15 15"><path d="M13 8V1H1v13h7M3 4h1M6 4h5M3 7h1M6 7h5M3 10h3"/><path d="M12 9v5M10 12l2 2 2-2" stroke="#1f7ae0"/></svg>钢筋信息</span>
        <span class="tg ml15"><svg class="icd" width="14" height="15" viewBox="0 0 14 15"><rect x=".5" y=".5" width="13" height="14" rx="2"/><path d="M4 4v4h6v3M4 11h6" stroke="#1f7ae0"/></svg>钢筋图库</span>
        <span class="tg ml13">其他<i class="tri ms-1 opacity-50"></i></span>
        <span class="ml11">单构件钢筋总重(kg)：116.836</span>
      </div>
      <div class="rb-wrap">
        <table class="table table-bordered tb-rb">
          <colgroup><col class="c0"><col class="c1"><col class="c2"><col class="c3"><col class="c4"><col class="c5"><col class="c6"><col class="c7"><col class="c8"><col class="c9"><col class="c10"><col class="c11"><col class="c12"><col class="c13"><col class="c14"><col class="c15"><col class="c16"></colgroup>
          <thead><tr><th></th><th class="th-a">筋号</th><th>直径(mm)</th><th>级别</th><th>图号</th><th>图形</th><th>计算公式</th><th>公式描述</th><th><div class="th-clip">弯曲调整</div></th><th>长度</th><th>根数</th><th>搭接</th><th>损耗(%)</th><th>单重(kg)</th><th>总重(kg)</th><th>钢筋归类</th><th>搭接形式</th></tr></thead>
          <tbody>
            <tr><td class="no no-a">1</td><td class="cj first-a">墙身水平钢筋.1</td><td>14</td><td><svg class="hrb"><use href="#hrbs"/></svg></td><td>64</td>
              <td class="shp"><svg viewBox="0 0 221 45"><text x="18" y="27">140</text><path d="M41 15v17h154V15" fill="none" stroke="#000" stroke-width="2"/><text class="red" x="118" y="27" text-anchor="middle">1970</text><text x="198" y="28">140</text></svg></td>
              <td class="fm">2000-15+10*d-15+10*d</td><td class="cj">净长-保护层+设⋯</td><td>58</td><td>2192</td><td>8</td><td>0</td><td>0</td><td>2.652</td><td>21.216</td><td class="cj">直筋</td><td class="cj">绑扎</td></tr>
            <tr><td class="no">2</td><td class="cj">墙在基础左侧水平筋.1</td><td>14</td><td><svg class="hrb"><use href="#hrbs"/></svg></td><td>64</td>
              <td class="shp"><svg viewBox="0 0 221 45"><text x="18" y="27">140</text><path d="M41 15v17h154V15" fill="none" stroke="#000" stroke-width="2"/><text class="red" x="118" y="27" text-anchor="middle">1970</text><text x="198" y="28">140</text></svg></td>
              <td class="fm">2000-15+10*d-15+10*d</td><td class="cj">净长-保护层+设⋯</td><td>58</td><td>2192</td><td>3</td><td>0</td><td>0</td><td>2.652</td><td>7.956</td><td class="cj">直筋</td><td class="cj">绑扎</td></tr>
            <tr><td class="no">3</td><td class="cj">墙在基础右侧水平筋.1</td><td>14</td><td><svg class="hrb"><use href="#hrbs"/></svg></td><td>64</td>
              <td class="shp"><svg viewBox="0 0 221 45"><text x="18" y="27">140</text><path d="M41 15v17h154V15" fill="none" stroke="#000" stroke-width="2"/><text class="red" x="118" y="27" text-anchor="middle">1970</text><text x="198" y="28">140</text></svg></td>
              <td class="fm">2000-15+10*d-15+10*d</td><td class="cj">净长-保护层+设⋯</td><td>58</td><td>2192</td><td>3</td><td>0</td><td>0</td><td>2.652</td><td>7.956</td><td class="cj">直筋</td><td class="cj">绑扎</td></tr>
            <tr><td class="no">4</td><td class="cj">压墙筋.1</td><td>22</td><td><svg class="hrb"><use href="#hrbs"/></svg></td><td>64</td>
              <td class="shp"><svg viewBox="0 0 221 45"><text x="18" y="27">220</text><path d="M41 15v17h154V15" fill="none" stroke="#000" stroke-width="2"/><text class="red" x="118" y="27" text-anchor="middle">1770</text><text x="198" y="28">220</text></svg></td>
              <td class="fm">1800-15+10*d-15+10*d</td><td class="cj">净长-保护层+设⋯</td><td>92</td><td>2118</td><td>5</td><td>0</td><td>0</td><td>6.312</td><td>31.56</td><td class="cj">直筋</td><td class="cj">直螺纹连接</td></tr>
            <tr><td class="no">5</td><td class="cj">墙身垂直钢筋.1</td><td>14</td><td><svg class="hrb"><use href="#hrbs"/></svg></td><td>18</td>
              <td class="shp"><svg viewBox="0 0 221 45"><text x="17" y="29">168</text><path d="M45 16v17h173" fill="none" stroke="#000" stroke-width="2"/><text class="red" x="123" y="24" text-anchor="middle">3135</text></svg></td>
              <td class="fm">3150-200+200-15+12*d</td><td class="cj">墙实际高度-节⋯</td><td>29</td><td>3274</td><td>2</td><td>0</td><td>0</td><td>3.962</td><td>7.924</td><td class="cj">直筋</td><td class="cj">绑扎</td></tr>
            <tr><td class="no">6</td><td class="cj">墙身垂直钢筋.2</td><td>14</td><td><svg class="hrb"><use href="#hrbs"/></svg></td><td>18</td>
              <td class="shp"><svg viewBox="0 0 221 45"><text x="17" y="29">168</text><path d="M45 16v17h173" fill="none" stroke="#000" stroke-width="2"/><text class="red" x="123" y="24" text-anchor="middle">2013</text></svg></td>
              <td class="fm">3150-500-1.2*37*d-200+200-<br>15+12*d</td><td class="cj">墙实际高度-错⋯</td><td>29</td><td>2152</td><td>2</td><td>0</td><td>0</td><td>2.604</td><td>5.208</td><td class="cj">直筋</td><td class="cj">绑扎</td></tr>
            <tr><td class="no">7</td><td class="cj">墙身垂直钢筋.3</td><td>14</td><td><svg class="hrb"><use href="#hrbs"/></svg></td><td>18</td>
              <td class="shp"><svg viewBox="0 0 221 45"><text x="17" y="29">168</text><path d="M45 16v17h173" fill="none" stroke="#000" stroke-width="2"/><text class="red" x="123" y="24" text-anchor="middle">2013</text></svg></td>
              <td class="fm">3150-500-1.2*37*d-200+200-<br>15+12*d</td><td class="cj">墙实际高度-错⋯</td><td>29</td><td>2152</td><td>2</td><td>0</td><td>0</td><td>2.604</td><td>5.208</td><td class="cj">直筋</td><td class="cj">绑扎</td></tr>
            <tr><td class="no">8</td><td class="cj">墙身垂直钢筋.4</td><td>14</td><td><svg class="hrb"><use href="#hrbs"/></svg></td><td>18</td>
              <td class="shp"><svg viewBox="0 0 221 45"><text x="17" y="29">168</text><path d="M45 16v17h173" fill="none" stroke="#000" stroke-width="2"/><text class="red" x="123" y="24" text-anchor="middle">3135</text></svg></td>
              <td class="fm">3150-200+200-15+12*d</td><td class="cj">墙实际高度-节⋯</td><td>29</td><td>3274</td><td>2</td><td>0</td><td>0</td><td>3.962</td><td>7.924</td><td class="cj">直筋</td><td class="cj">绑扎</td></tr>
            <tr><td class="no"></td><td></td><td></td><td></td><td></td><td class="shp"></td><td></td><td class="cj">搭接+节点<br>高度⋯</td><td></td><td></td><td></td><td></td><td></td><td></td><td></td><td></td><td></td></tr>
          </tbody>
        </table>
      </div>
      <div class="hs-track"><div class="hs-thumb"></div></div>
      <svg class="ring" viewBox="0 0 113 134"><ellipse cx="56.500" cy="67" rx="55" ry="65.500" fill="none" stroke="#f0241a" stroke-width="2.500"/></svg>
      <div class="scr scr-rb"></div>
    </section>
  </main>
  <div class="sp-v"><div class="sp-bar"></div></div>
  <!-- display settings -->
  <aside class="col-right d-flex flex-column">
    <div class="strip"><svg class="strip-x"><use href="#x"/></svg></div>
    <div class="p-title ps-2">显示设置</div>
    <ul class="nav nav-tabs disp-tabs">
      <li class="nav-item"><a class="nav-link active">图元显示</a></li>
      <li class="nav-item"><a class="nav-link">楼层显示</a></li>
    </ul>
    <div class="disp-wrap">
      <table class="table table-bordered tb-disp">
        <colgroup><col class="w128"><col class="w63"><col class="w63"></colgroup>
        <thead><tr><th>图层构件</th><th class="th-a">显示图元</th><th>显示名称</th></tr></thead>
        <tbody>
          <tr><td class="nm">基础工程</td><td><input class="form-check-input cb" type="checkbox"></td><td><input class="form-check-input cb" type="checkbox"></td></tr>
          <tr><td class="nm">主体结构</td><td><input class="form-check-input cb" type="checkbox" checked></td><td><input class="form-check-input cb" type="checkbox"></td></tr>
          <tr><td class="nm">二次结构</td><td><input class="form-check-input cb" type="checkbox"></td><td><input class="form-check-input cb" type="checkbox"></td></tr>
          <tr><td class="nm">装饰装修</td><td><input class="form-check-input cb" type="checkbox"></td><td><input class="form-check-input cb" type="checkbox"></td></tr>
          <tr><td class="nm">其它土建</td><td><input class="form-check-input cb" type="checkbox"></td><td><input class="form-check-input cb" type="checkbox"></td></tr>
          <tr><td class="nm end">钢筋工程</td><td><input class="form-check-input cb" type="checkbox" checked></td><td><input class="form-check-input cb" type="checkbox"></td></tr>
          <tr><td class="gp"><span class="clp">−</span>轴线</td><td><input class="form-check-input cb" type="checkbox" checked></td><td><input class="form-check-input cb cb-off" type="checkbox"></td></tr>
          <tr><td class="nm">轴网</td><td><input class="form-check-input cb" type="checkbox" checked></td><td><input class="form-check-input cb cb-off" type="checkbox"></td></tr>
          <tr><td class="nm end">辅助轴线</td><td><input class="form-check-input cb" type="checkbox" checked></td><td><input class="form-check-input cb cb-off" type="checkbox"></td></tr>
          <tr><td class="gp"><span class="clp">−</span>柱</td><td><input class="form-check-input cb" type="checkbox" checked></td><td><input class="form-check-input cb" type="checkbox"></td></tr>
          <tr><td class="nm">柱</td><td><input class="form-check-input cb" type="checkbox" checked></td><td><input class="form-check-input cb" type="checkbox"></td></tr>
          <tr><td class="nm">构造柱</td><td><input class="form-check-input cb" type="checkbox" checked></td><td><input class="form-check-input cb" type="checkbox"></td></tr>
          <tr><td class="nm">砌体柱</td><td><input class="form-check-input cb" type="checkbox" checked></td><td><input class="form-check-input cb" type="checkbox"></td></tr>
          <tr><td class="nm end">约束边缘非阴...</td><td><input class="form-check-input cb" type="checkbox" checked></td><td><input class="form-check-input cb" type="checkbox"></td></tr>
          <tr><td class="gp"><span class="clp">−</span>墙</td><td><input class="form-check-input cb cb-part" type="checkbox"></td><td><input class="form-check-input cb" type="checkbox"></td></tr>
          <tr><td class="nm">剪力墙</td><td class="cell-cur"><input class="form-check-input cb" type="checkbox" checked></td><td><input class="form-check-input cb" type="checkbox"></td></tr>
          <tr><td class="nm">人防门框墙</td><td><input class="form-check-input cb" type="checkbox" checked></td><td><input class="form-check-input cb" type="checkbox"></td></tr>
          <tr><td class="nm">砌体墙</td><td><input class="form-check-input cb" type="checkbox" checked></td><td><input class="form-check-input cb" type="checkbox"></td></tr>
          <tr><td class="nm">砌体加筋</td><td><input class="form-check-input cb" type="checkbox"></td><td><input class="form-check-input cb" type="checkbox"></td></tr>
          <tr><td class="nm">保温墙</td><td><input class="form-check-input cb" type="checkbox" checked></td><td><input class="form-check-input cb" type="checkbox"></td></tr>
          <tr><td class="nm">暗梁</td><td><input class="form-check-input cb" type="checkbox"></td><td><input class="form-check-input cb" type="checkbox"></td></tr>
          <tr><td class="nm">墙垛</td><td><input class="form-check-input cb" type="checkbox" checked></td><td><input class="form-check-input cb" type="checkbox"></td></tr>
          <tr><td class="nm end">幕墙</td><td><input class="form-check-input cb" type="checkbox" checked></td><td><input class="form-check-input cb" type="checkbox"></td></tr>
          <tr><td class="gp"><span class="clp">−</span>门窗洞</td><td><input class="form-check-input cb cb-part" type="checkbox"></td><td><input class="form-check-input cb" type="checkbox"></td></tr>
          <tr><td class="nm">门</td><td><input class="form-check-input cb" type="checkbox" checked></td><td><input class="form-check-input cb" type="checkbox"></td></tr>
          <tr><td class="nm">窗</td><td><input class="form-check-input cb" type="checkbox" checked></td><td><input class="form-check-input cb" type="checkbox"></td></tr>
          <tr><td class="nm">门联窗</td><td><input class="form-check-input cb" type="checkbox" checked></td><td><input class="form-check-input cb" type="checkbox"></td></tr>
          <tr><td class="nm">墙洞</td><td><input class="form-check-input cb" type="checkbox" checked></td><td><input class="form-check-input cb" type="checkbox"></td></tr>
          <tr><td class="nm">带形窗</td><td><input class="form-check-input cb" type="checkbox" checked></td><td><input class="form-check-input cb" type="checkbox"></td></tr>
          <tr><td class="nm">带形洞</td><td><input class="form-check-input cb" type="checkbox" checked></td><td><input class="form-check-input cb" type="checkbox"></td></tr>
          <tr><td class="nm">飘窗</td><td><input class="form-check-input cb" type="checkbox" checked></td><td><input class="form-check-input cb" type="checkbox"></td></tr>
          <tr><td class="nm">老虎窗</td><td><input class="form-check-input cb" type="checkbox"></td><td><input class="form-check-input cb" type="checkbox"></td></tr>
          <tr><td class="nm">过梁</td><td><input class="form-check-input cb" type="checkbox"></td><td><input class="form-check-input cb" type="checkbox"></td></tr>
          <tr><td class="nm end">壁龛</td><td><input class="form-check-input cb" type="checkbox"></td><td><input class="form-check-input cb" type="checkbox"></td></tr>
          <tr><td class="gp"><span class="clp">+</span>梁</td><td><input class="form-check-input cb" type="checkbox"></td><td><input class="form-check-input cb" type="checkbox"></td></tr>
        </tbody>
      </table>
    </div>
    <div class="d-flex justify-content-end"><button type="button" class="btn dft-btn">恢复默认设置</button></div>
    <div class="scr scr-disp"></div>
  </aside>
</div>
<script src="https://cdn.jsdelivr.net/npm/bootstrap@5.3.0/dist/js/bootstrap.bundle.min.js"></script>
</body>
</html>
